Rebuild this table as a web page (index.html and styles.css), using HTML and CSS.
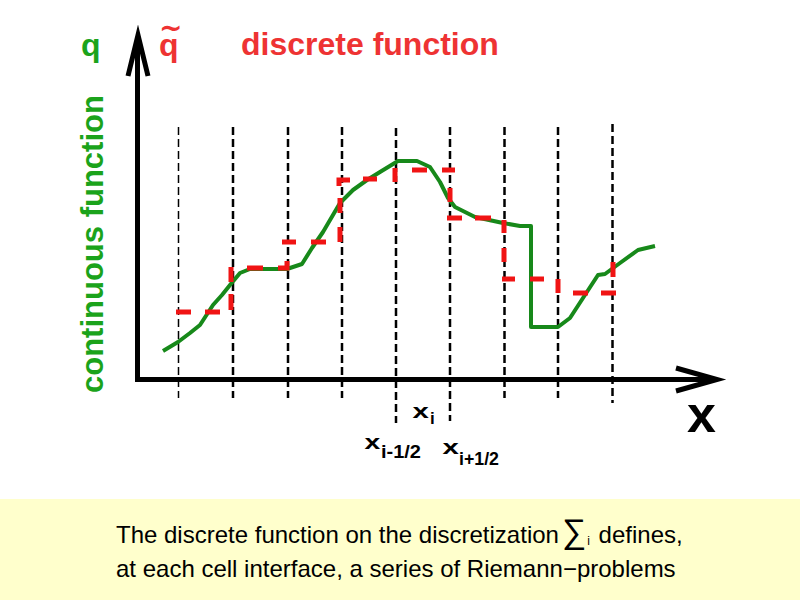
FILE: index.html
```html
<!DOCTYPE html>
<html>
<head>
<meta charset="utf-8">
<link rel="stylesheet" href="styles.css">
</head>
<body>
<div class="page">
  <div class="figure">
    <svg class="plot" width="800" height="499" viewBox="0 0 800 499" xmlns="http://www.w3.org/2000/svg">
      <g class="grid">
        <line class="thin" x1="178.5" y1="127" x2="178.5" y2="398"/>
        <line x1="233" y1="127" x2="233" y2="398"/>
        <line x1="288" y1="127" x2="288" y2="398"/>
        <line x1="342" y1="127" x2="342" y2="398"/>
        <line x1="396" y1="128" x2="396" y2="423"/>
        <line x1="450" y1="127" x2="450" y2="421"/>
        <line x1="504.5" y1="127" x2="504.5" y2="398"/>
        <line x1="558" y1="127" x2="558" y2="398"/>
        <line x1="612.5" y1="124" x2="612.5" y2="403"/>
      </g>
      <g class="axis">
        <line x1="137.5" y1="382" x2="137.5" y2="38"/>
        <line x1="135" y1="379.5" x2="714" y2="379.5"/>
        <polyline class="head" points="128,76 138,35 148,76"/>
        <polyline class="head" points="676,368 717,379.5 676,391"/>
      </g>
      <polyline class="curve" points="163,351 178,342 190,333 200,325 213,305 222,295 230,285 240,273 250,269 287,269 302,264 312,248 323,232 340,203 353,190 367,180 380,172 398,161 417,161 430,167 440,182 448,198 455,207 475,217 503,223 520,226 531,226 531,327 558,327 570,318 583,298 598,275 605,274 620,263 638,250 655,246"/>
      <path class="steps" d="M176 312H191 M205 312H220 M231 310V294 M231 282V267 M247 268H263 M278 268H287V261 M282 242H296 M311 242H326 M340 242V227 M340 213V198 M339 186V180H350 M363 179H377 M395 182V168 M412 170H427 M442 170H455 M450 188V202 M447 218H462 M475 218H491 M504 220V233 M504 248V262 M502 279H515 M530 279H544 M558 279V293 M573 293H588 M601 293H616 M613 262V277"/>

      <text class="lbl green q" x="81" y="56">q</text>
      <text class="lbl red q" x="159" y="56">q<tspan class="tilde" x="159" y="37">~</tspan></text>
      <text class="lbl red title" x="241" y="55">discrete function</text>
      <text class="lbl green side" transform="translate(103,393) rotate(-90)">continuous function</text>

      <text class="lbl big" x="687" y="432">x</text>

      <text class="lbl sx" transform="translate(412.5,418) scale(1.4,1)">x</text>
      <text class="lbl si" x="430" y="424">i</text>

      <text class="lbl sx" transform="translate(364.5,449) scale(1.35,1)">x</text>
      <text class="lbl ss" x="381" y="458" textLength="40" lengthAdjust="spacingAndGlyphs">i-1/2</text>

      <text class="lbl sx" transform="translate(442.5,454) scale(1.4,1)">x</text>
      <text class="lbl ss" x="459" y="465" textLength="40" lengthAdjust="spacingAndGlyphs">i+1/2</text>
    </svg>
  </div>
  <div class="caption">
    <div class="line">The discrete function on the discretization<span class="sum">∑<sub class="sub">i</sub></span> defines,</div>
    <div class="line">at each cell interface, a series of Riemann−problems</div>
  </div>
</div>
</body>
</html>
```

FILE: styles.css
```css
html, body {
  margin: 0;
  padding: 0;
  background: #ffffff;
}

.page {
  width: 800px;
  height: 600px;
  display: flex;
  flex-direction: column;
  overflow: hidden;
}

.figure {
  height: 499px;
  flex: none;
}

.plot {
  display: block;
}

.grid line {
  stroke: #000000;
  stroke-width: 2.5;
  stroke-dasharray: 8 4;
}

.grid line.thin {
  stroke-width: 1.5;
}

.axis line {
  stroke: #000000;
  stroke-width: 5;
}

.axis .head {
  fill: none;
  stroke: #000000;
  stroke-width: 5;
  stroke-linejoin: miter;
  stroke-miterlimit: 10;
}

.curve {
  fill: none;
  stroke: #17891a;
  stroke-width: 4;
  stroke-linejoin: round;
}

.steps {
  fill: none;
  stroke: #f01414;
  stroke-width: 5;
  stroke-linecap: butt;
}

.lbl {
  font-family: "Liberation Sans", Arial, sans-serif;
  font-weight: bold;
}

.green {
  fill: #1ba31b;
}

.red {
  fill: #ee3333;
}

.q {
  font-size: 32px;
}

.tilde {
  font-size: 28px;
  font-family: "DejaVu Sans", "Liberation Sans", sans-serif;
}

.title {
  font-size: 32px;
}

.side {
  font-size: 31px;
}

.big {
  font-size: 52px;
  fill: #000000;
}

.sx {
  font-size: 21px;
  fill: #000000;
}

.si {
  font-size: 17px;
  fill: #000000;
}

.ss {
  font-size: 19px;
  fill: #000000;
}

.caption {
  flex: 1;
  background: #ffffcc;
  box-sizing: border-box;
  padding: 18px 0 0 116px;
  font-family: "Liberation Sans", Arial, sans-serif;
  font-size: 24px;
  line-height: 34px;
  color: #000000;
}

.line {
  white-space: nowrap;
}

.sum {
  display: inline-block;
  width: 30px;
  margin-left: 3px;
  font-size: 34px;
  line-height: 28px;
}

.sub {
  font-size: 12px;
  line-height: 12px;
  vertical-align: -2px;
  margin-left: 1px;
}
```
